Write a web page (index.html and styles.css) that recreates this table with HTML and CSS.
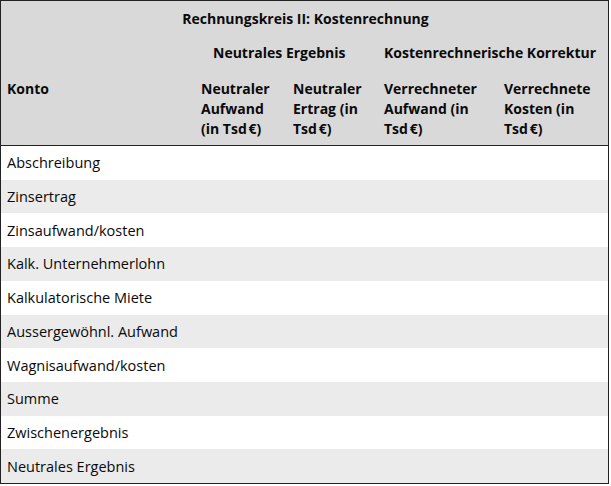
FILE: index.html
```html
<!DOCTYPE html>
<html lang="de">
<head>
<meta charset="utf-8">
<link rel="stylesheet" href="styles.css">
</head>
<body>
<div class="table">
  <div class="head">
    <div class="title">Rechnungskreis II: Kostenrechnung</div>
    <div class="konto">Konto</div>
    <div class="group g1">Neutrales Ergebnis</div>
    <div class="group g2">Kostenrechnerische Korrektur</div>
    <div class="col c2">Neutraler Aufwand (in Tsd&#8239;€)</div>
    <div class="col c3">Neutraler Ertrag (in Tsd&#8239;€)</div>
    <div class="col c4">Verrechneter Aufwand (in Tsd&#8239;€)</div>
    <div class="col c5">Verrechnete Kosten (in Tsd&#8239;€)</div>
  </div>
  <div class="body">
    <div class="row">Abschreibung</div>
    <div class="row alt">Zinsertrag</div>
    <div class="row">Zinsaufwand/kosten</div>
    <div class="row alt">Kalk. Unternehmerlohn</div>
    <div class="row">Kalkulatorische Miete</div>
    <div class="row alt">Aussergewöhnl. Aufwand</div>
    <div class="row">Wagnisaufwand/kosten</div>
    <div class="row alt">Summe</div>
    <div class="row">Zwischenergebnis</div>
    <div class="row alt">Neutrales Ergebnis</div>
  </div>
</div>
</body>
</html>
```
FILE: styles.css
```css
html, body {
  margin: 0;
  padding: 0;
  background: #ffffff;
}
body {
  font-family: "Open Sans", "Noto Sans", sans-serif;
  font-size: 14.5px;
  color: #0a0a0a;
}
.table {
  width: 609px;
  height: 484px;
  box-sizing: border-box;
  border: 1.5px solid #222;
  display: flex;
  flex-direction: column;
}
.head {
  background: #d9d9d9;
  border-bottom: 1.5px solid #222;
  display: grid;
  grid-template-columns: 193px 92px 91px 120px 1fr;
  grid-template-rows: 34px 36px 74px;
  font-weight: 700;
  font-size: 14px;
  line-height: 20px;
}
.title {
  grid-column: 1 / 6;
  grid-row: 1;
  text-align: center;
  align-self: center;
  padding-top: 2px;
  padding-left: 2px;
}
.konto {
  grid-column: 1;
  grid-row: 3;
  padding: 8px 6px 0 6px;
}
.group {
  grid-row: 2;
  align-self: center;
}
.g1 {
  grid-column: 2 / 4;
  padding-left: 19px;
}
.g2 {
  grid-column: 4 / 6;
  padding-left: 7px;
}
.col {
  grid-row: 3;
  padding: 8px 7px 0 7px;
}
.c2 { grid-column: 2; }
.c3 { grid-column: 3; }
.c4 { grid-column: 4; }
.c5 { grid-column: 5; }
.body {
  flex: 1;
  display: flex;
  flex-direction: column;
}
.row {
  flex: 1;
  display: flex;
  align-items: center;
  padding: 0 6px;
  background: #ffffff;
}
.row.alt {
  background: #ebebeb;
}
```
